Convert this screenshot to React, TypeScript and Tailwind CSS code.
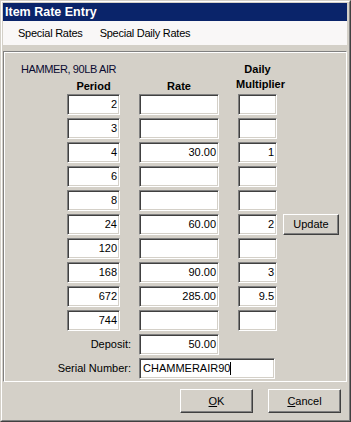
const rows = [
  { period: "2", rate: "", mult: "" },
  { period: "3", rate: "", mult: "" },
  { period: "4", rate: "30.00", mult: "1" },
  { period: "6", rate: "", mult: "" },
  { period: "8", rate: "", mult: "" },
  { period: "24", rate: "60.00", mult: "2", update: true },
  { period: "120", rate: "", mult: "" },
  { period: "168", rate: "90.00", mult: "3" },
  { period: "672", rate: "285.00", mult: "9.5" },
  { period: "744", rate: "", mult: "" },
]

const field =
  "h-[21px] bg-white border border-t-[#808080] border-l-[#808080] border-b-white border-r-white shadow-[inset_1px_1px_0_#404040,inset_-1px_-1px_0_#d4d0c8] flex items-center text-[11px] text-black leading-none"

const button =
  "bg-[#d4d0c8] border border-t-white border-l-white border-b-[#404040] border-r-[#404040] shadow-[inset_-1px_-1px_0_#808080] flex items-center justify-center text-[11px] text-black"

function Cell({ value, className = "" }: { value: string; className?: string }) {
  return <div className={`${field} justify-end pr-[2px] ${className}`}>{value}</div>
}

export default function App() {
  return (
    <div className="w-[351px] h-[422px] bg-[#d4d0c8] font-['Liberation_Sans',Arial,sans-serif] border border-t-[#d4d0c8] border-l-[#d4d0c8] border-b-[#404040] border-r-[#404040]">
      <div className="h-full border border-t-white border-l-white border-b-[#808080] border-r-[#808080] p-px flex flex-col">
        {/* title bar */}
        <div className="h-[18px] bg-[#0a246a] text-white font-bold text-[12.5px] flex items-center pl-[2px] mr-px">
          Item Rate Entry
        </div>

        {/* menu */}
        <div className="h-[24px] bg-[#f9f7f7] flex items-center text-[11px] text-black pl-[15px] gap-[17px] mr-px tracking-[-0.25px]">
          <span>Special Rates</span>
          <span>Special Daily Rates</span>
        </div>

        {/* panel */}
        <div className="mt-[6px] mr-px border border-t-[#808080] border-l-[#808080] border-b-white border-r-white shadow-[inset_1px_1px_0_white] pt-[10px] pb-[2px]">
          <div className="grid grid-cols-[63px_53px_19px_80px_19px_39px_6px_56px] text-[11px] text-black leading-[15px]">
            <div className="col-span-5 pl-[17px] text-[#0a0a30] tracking-[-0.4px]">HAMMER, 90LB AIR</div>
            <div className="col-start-6 font-bold text-center whitespace-nowrap flex justify-center">Daily</div>
            <div className="col-start-2 font-bold text-center pt-[2px]">Period</div>
            <div className="col-start-4 font-bold text-center pt-[2px]">Rate</div>
            <div className="col-start-6 font-bold whitespace-nowrap flex justify-center -mr-[6px]">Multiplier</div>
          </div>

          <div className="grid grid-cols-[63px_53px_19px_80px_19px_39px_6px_56px] gap-y-[3px]">
            {rows.map((r, i) => (
              <div key={i} className="contents">
                <Cell value={r.period} className="col-start-2" />
                <Cell value={r.rate} className="col-start-4" />
                <Cell value={r.mult} className="col-start-6" />
                {r.update && <div className={`${button} col-start-8 h-[21px]`}>Update</div>}
              </div>
            ))}
            <div className="col-span-3 col-start-1 flex items-center justify-end pr-[8px] text-[11px] text-black">
              Deposit:
            </div>
            <Cell value="50.00" className="col-start-4" />
            <div className="col-span-3 col-start-1 flex items-center justify-end pr-[8px] text-[11px] text-black">
              Serial Number:
            </div>
            <div className={`${field} col-start-4 col-span-3 w-[136px] pl-[3px]`}>
              CHAMMERAIR90
              <span className="inline-block w-px h-[13px] bg-black" />
            </div>
          </div>
        </div>

        {/* buttons */}
        <div className="mt-[7px] flex justify-end gap-[15px] pr-[7px]">
          <button className={`${button} w-[73px] h-[24px]`}>
            <span className="underline underline-offset-1">O</span>K
          </button>
          <button className={`${button} w-[73px] h-[24px]`}>
            <span className="underline underline-offset-1">C</span>ancel
          </button>
        </div>
      </div>
    </div>
  )
}
